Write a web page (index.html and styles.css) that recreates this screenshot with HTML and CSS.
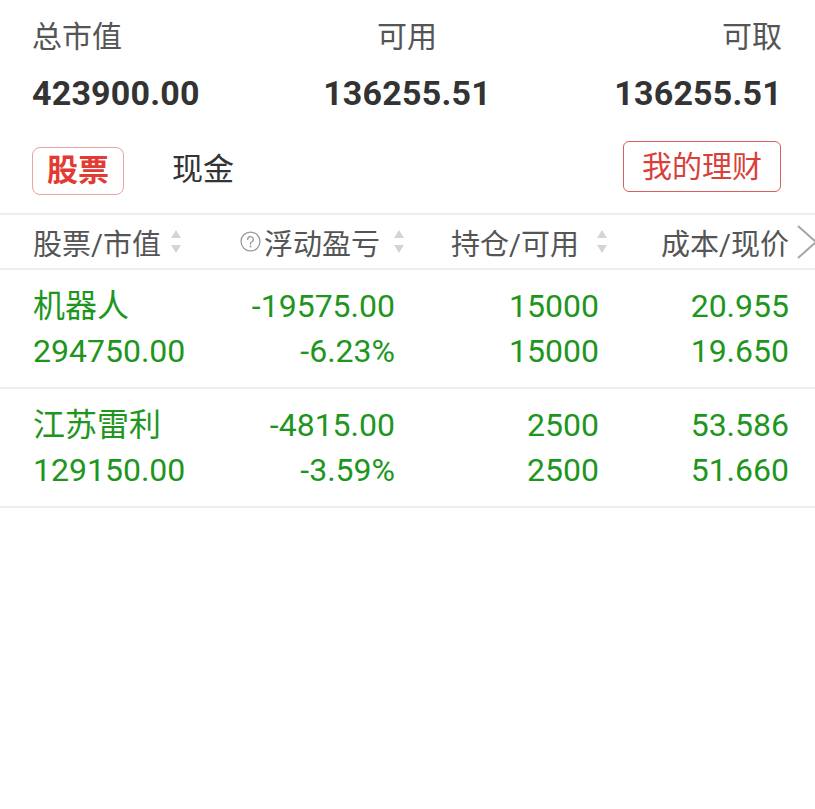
FILE: index.html
```html
<!DOCTYPE html>
<html lang="zh-CN">
  <head>
    <meta charset="UTF-8" />
    <meta name="viewport" content="width=device-width, initial-scale=1.0" />
    <title>持仓</title>
    <link rel="stylesheet" href="styles.css">
  </head>
  <body>
    <!-- Account summary -->
    <section class="summary">
      <div class="summary-item"><span class="summary-label">总市值</span><span class="summary-value">423900.00</span></div>
      <div class="summary-item center"><span class="summary-label">可用</span><span class="summary-value">136255.51</span></div>
      <div class="summary-item right"><span class="summary-label">可取</span><span class="summary-value">136255.51</span></div>
    </section>

    <!-- Tabs -->
    <nav class="tabs">
      <a class="tab active">股票</a>
      <a class="tab">现金</a>
      <a class="wealth-btn">我的理财</a>
    </nav>

    <!-- Positions -->
    <div class="table">
      <div class="thead">
        <div class="th left">股票/市值<span class="sort"><i class="up"></i><i class="down"></i></span></div>
        <div class="th"><svg class="help" viewBox="0 0 20 20" width="21" height="21"><circle cx="10" cy="10" r="9" fill="none" stroke="#9a9a9a" stroke-width="1.2"/><path d="M7.3 8a2.7 2.7 0 1 1 3.7 2.5c-.7.3-1 .8-1 1.5v.7" fill="none" stroke="#9a9a9a" stroke-width="1.2" stroke-linecap="round"/><circle cx="10" cy="14.8" r=".9" fill="#9a9a9a"/></svg>浮动盈亏<span class="sort"><i class="up"></i><i class="down"></i></span></div>
        <div class="th">持仓/可用<span class="sort wide"><i class="up"></i><i class="down"></i></span></div>
        <div class="th">成本/现价<svg class="more" viewBox="0 0 22 34" width="22" height="34"><path d="M2 1l18 16L2 33" fill="none" stroke="#a6a6a6" stroke-width="2"/></svg></div>
      </div>

      <div class="row">
        <div class="cell left">机器人<br>294750.00</div>
        <div class="cell">-19575.00<br>-6.23%</div>
        <div class="cell">15000<br>15000</div>
        <div class="cell">20.955<br>19.650</div>
      </div>
      <div class="row">
        <div class="cell left">江苏雷利<br>129150.00</div>
        <div class="cell">-4815.00<br>-3.59%</div>
        <div class="cell">2500<br>2500</div>
        <div class="cell">53.586<br>51.660</div>
      </div>
    </div>
  </body>
</html>
```

FILE: styles.css
```css
/* ---------- Reset & Base ---------- */
*{box-sizing:border-box;margin:0;padding:0;}
html,body{background:#fff;font-family:Roboto,"Noto Sans CJK SC",sans-serif;color:#333;}
body{overflow-x:hidden;}

/* ---------- Summary ---------- */
.summary{display:flex;justify-content:space-between;padding:19px 33px 0 32px;}
.summary-item{display:flex;flex-direction:column;align-items:flex-start;}
.summary-item.center{align-items:center;}
.summary-item.right{align-items:flex-end;}
.summary-label{font-size:30px;line-height:36px;color:#555;}
.summary-value{font-size:34px;line-height:40px;font-weight:700;color:#333;margin-top:18px;letter-spacing:.2px;}

/* ---------- Tabs ---------- */
.tabs{display:flex;align-items:flex-start;padding:28px 34px 0 32px;}
.tab{font-size:31px;line-height:46px;color:#333;margin-top:6px;margin-right:48px;}
.tab.active{color:#e33a32;font-weight:700;border:1px solid #e6a5a2;border-radius:8px;padding:0 14px;}
.wealth-btn{margin-left:auto;font-size:30px;line-height:49px;color:#d9403a;border:1px solid #d9605a;border-radius:6px;padding:0 18px;}

/* ---------- Table ---------- */
.table{margin-top:18px;}
.thead,.row{display:grid;grid-template-columns:181px 181px 204px 190px;padding:0 27px 0 33px;border-top:2px solid #eeeeee;}
.row:last-child{border-bottom:2px solid #eeeeee;}
.thead{height:55px;align-items:center;}
.th{display:flex;align-items:center;justify-content:flex-end;font-size:29px;color:#555;white-space:nowrap;}
.th.left{justify-content:flex-start;}
.help{margin-right:3px;}
.sort{display:flex;flex-direction:column;gap:7px;margin-left:14px;margin-right:-9px;}
.th.left .sort{margin-left:10px;margin-right:0;}
.sort.wide{margin-left:18px;margin-right:-8px;}
.sort i{display:block;width:0;height:0;border-left:5.5px solid transparent;border-right:5.5px solid transparent;}
.sort .up{border-bottom:8px solid #d4d4d4;}
.sort .down{border-top:8px solid #d4d4d4;}
.more{margin-left:7px;margin-right:-29px;}

.row{padding-top:14px;padding-bottom:13px;}
.cell{font-size:32px;line-height:45px;color:#1e961e;text-align:right;white-space:nowrap;}
.cell.left{text-align:left;}
```
